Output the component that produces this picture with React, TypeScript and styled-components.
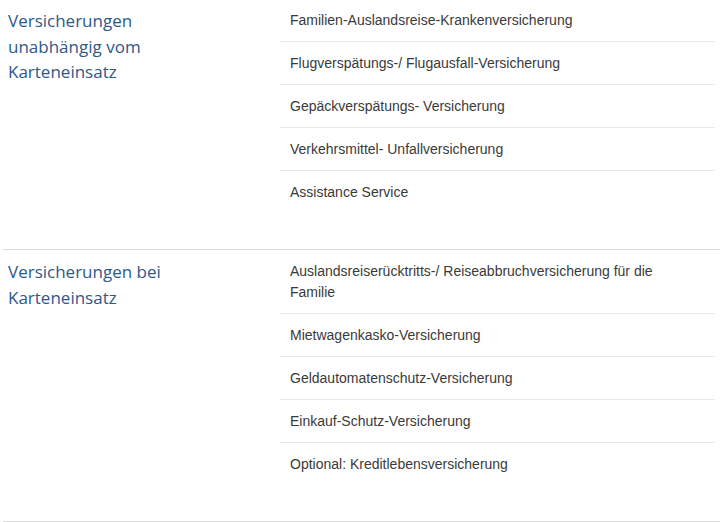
import React from "react";
import styled, { createGlobalStyle } from "styled-components";

const Global = createGlobalStyle`
  html, body { margin: 0; padding: 0; background: #fff; }
  body { font-family: "Liberation Sans", Arial, sans-serif; }
`;

const Page = styled.div`
  width: 717px;
  margin: -1px 0 0 3px;
`;

const Section = styled.section`
  display: grid;
  grid-template-columns: 277px 1fr;
  padding-right: 5px;
  border-bottom: 1px solid #dcdcdc;
`;

const Title = styled.h3`
  margin: 0;
  padding: 9px 0 0 5px;
  max-width: 190px;
  font-family: "Open Sans", "Noto Sans", sans-serif;
  font-weight: 400;
  font-size: 17px;
  line-height: 25.5px;
  color: #2f5889;
`;

const List = styled.ul`
  list-style: none;
  margin: 0;
  padding: 0 0 36px;
`;

const Item = styled.li<{ $last?: boolean }>`
  padding: 11px 35px 10px 10px;
  font-size: 14px;
  line-height: 21px;
  color: #3a3a3a;
  border-bottom: ${(p) => (p.$last ? "none" : "1px solid #e8e8e8")};
`;

const sections = [
  {
    title: "Versicherungen unabhängig vom Karteneinsatz",
    items: [
      "Familien-Auslandsreise-Krankenversicherung",
      "Flugverspätungs-/ Flugausfall-Versicherung",
      "Gepäckverspätungs- Versicherung",
      "Verkehrsmittel- Unfallversicherung",
      "Assistance Service",
    ],
  },
  {
    title: "Versicherungen bei Karteneinsatz",
    items: [
      "Auslandsreiserücktritts-/ Reiseabbruchversicherung für die Familie",
      "Mietwagenkasko-Versicherung",
      "Geldautomatenschutz-Versicherung",
      "Einkauf-Schutz-Versicherung",
      "Optional: Kreditlebensversicherung",
    ],
  },
];

export default function App() {
  return (
    <>
      <Global />
      <Page>
        {sections.map((s) => (
          <Section key={s.title}>
            <Title>{s.title}</Title>
            <List>
              {s.items.map((it, i) => (
                <Item key={it} $last={i === s.items.length - 1}>
                  {it}
                </Item>
              ))}
            </List>
          </Section>
        ))}
      </Page>
    </>
  );
}
